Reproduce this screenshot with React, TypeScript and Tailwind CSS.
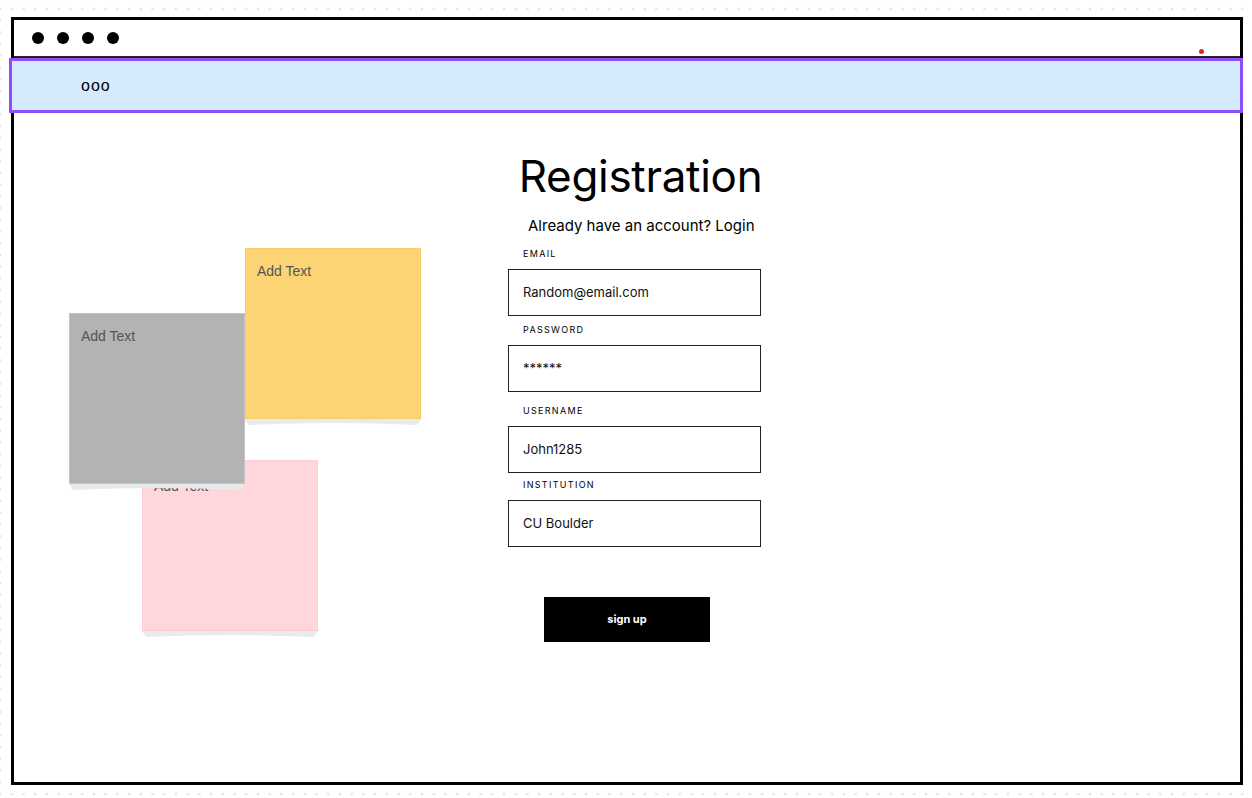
import React from "react";

const fields = [
  { label: "EMAIL", value: "Random@email.com", gap: "mt-[13px]" },
  { label: "PASSWORD", value: "******", gap: "mt-[8px]" },
  { label: "USERNAME", value: "John1285", gap: "mt-[13px]" },
  { label: "INSTITUTION", value: "CU Boulder", gap: "mt-[6px]" },
];

function Note({ className, color, pad }: { className: string; color: string; pad: string }) {
  return (
    <div className={`absolute w-[176px] h-[171px] ${className}`}>
      <svg className="absolute left-0 top-full" width="176" height="7" viewBox="0 0 176 7">
        <path d="M0 0 H176 L172 6 Q88 2 4 6 Z" fill="#e9eaec" />
      </svg>
      <div className={`relative w-full h-full ${color} ${pad} px-[11px] text-[14px] text-[#545454] font-['Liberation_Sans',Arial,sans-serif]`}>
        Add Text
      </div>
    </div>
  );
}

export default function App() {
  return (
    <div className="w-[1252px] h-[798px] bg-white bg-[radial-gradient(circle,#e4e4e4_1.3px,transparent_1.6px)] bg-[length:11.73px_11.73px] bg-[position:6px_3px] overflow-hidden pt-[17px] px-[11px]">
      <div className="relative w-[1232px] h-[768px] border-[3px] border-black bg-white">
        {/* window dots */}
        <div className="h-[38px] border-b-2 border-[#222] flex items-center gap-[13px] pl-[18px] relative">
          <span className="w-[12px] h-[12px] rounded-full bg-black" />
          <span className="w-[12px] h-[12px] rounded-full bg-black" />
          <span className="w-[12px] h-[12px] rounded-full bg-black" />
          <span className="w-[12px] h-[12px] rounded-full bg-black" />
          <span className="absolute right-[36px] top-[29px] w-[5px] h-[5px] rounded-full bg-[#e0262b]" />
        </div>

        {/* nav bar */}
        <div className="-ml-[5px] -mr-[3px] h-[55px] border-[3px] border-[#8f4dfc] bg-[#d6eafd] flex items-center pl-[69px]">
          <span className="text-[16px] tracking-[1px] font-['Liberation_Sans',Arial,sans-serif] text-black mt-[1px]">ooo</span>
        </div>

        {/* sticky notes */}
        <Note className="left-[128px] top-[440px]" color="bg-[#fed6dc] border border-[#f8cdd4]" pad="pt-[15px]" />
        <Note className="left-[55px] top-[293px]" color="bg-[#b3b3b3] border border-[#c4c4c4]" pad="pt-[12px]" />
        <Note className="left-[231px] top-[228px]" color="bg-[#fdd474] border border-[#f7cd6c]" pad="pt-[12px]" />

        {/* form */}
        <div className="flex flex-col pl-[494px] pt-[35px]">
          <h1 className="w-[265px] text-center text-[44px] leading-[56px] text-black font-['Inter',sans-serif] font-normal tracking-[-0.3px]">
            Registration
          </h1>
          <p className="w-[265px] mt-[12px] pl-[20px] text-[15px] leading-[20px] text-black font-['Inter',sans-serif]">
            Already have an account? Login
          </p>
          {fields.map((f, i) => (
            <div key={f.label} className={i === 0 ? "mt-[12px]" : f.gap}>
              <div className="pl-[15px] text-[9px] leading-[12px] tracking-[1.3px] text-black font-['Inter',sans-serif]">
                {f.label}
              </div>
              <div className="mt-[9px] w-[253px] h-[47px] border border-[#222] flex items-center pl-[14px] text-[13px] text-[#111] font-['Inter',sans-serif]">
                {f.value}
              </div>
            </div>
          ))}
          <button className="ml-[36px] mt-[50px] w-[166px] h-[45px] bg-black text-white text-[11px] font-bold font-['Inter',sans-serif]">
            sign up
          </button>
        </div>
      </div>
    </div>
  );
}
